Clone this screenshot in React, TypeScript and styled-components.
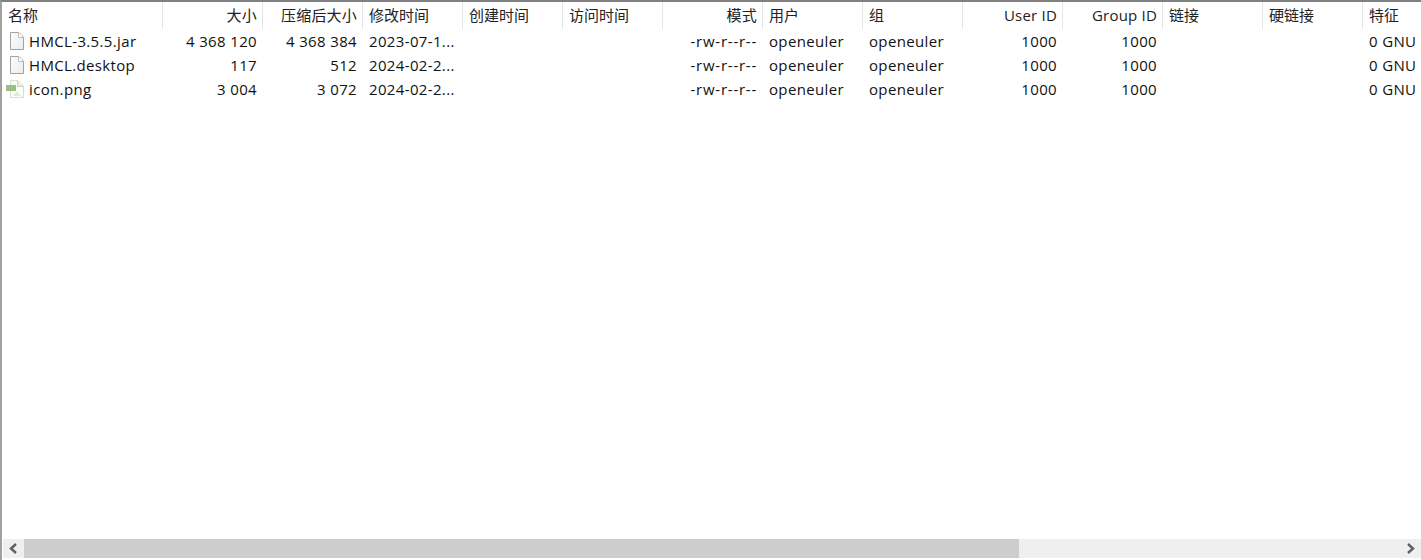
import React from "react"
import styled, { createGlobalStyle } from "styled-components"

const GlobalStyle = createGlobalStyle`
  html, body {
    margin: 0;
    padding: 0;
    background: #fff;
    overflow: hidden;
  }
`

const Window = styled.div`
  box-sizing: border-box;
  width: 1421px;
  height: 560px;
  display: flex;
  flex-direction: column;
  background: #fff;
  border-top: 2px solid #808080;
  border-left: 2px solid #a0a0a0;
  font-family: "Open Sans", "Noto Sans CJK SC", sans-serif;
  font-size: 15px;
  letter-spacing: 0.35px;
  color: #111;
`

const ListArea = styled.div`
  flex: 1;
  min-height: 0;
  overflow: hidden;
`

const columns = "161px repeat(12, 100px) 60px"

const HeaderRow = styled.div`
  display: grid;
  grid-template-columns: ${columns};
  height: 27px;
`

const HeaderCell = styled.div<{ $right?: boolean }>`
  box-sizing: border-box;
  padding: 0 5px 0 6px;
  height: 27px;
  line-height: 27px;
  white-space: nowrap;
  overflow: hidden;
  border-right: 1px solid #e5e5e5;
  letter-spacing: ${(p) => (p.$right ? "0.2px" : "0")};
  text-align: ${(p) => (p.$right ? "right" : "left")};
  color: #222;
`

const Row = styled.div`
  display: grid;
  grid-template-columns: ${columns};
  height: 24px;
`

const Cell = styled.div<{ $right?: boolean }>`
  box-sizing: border-box;
  padding: 0 6px;
  line-height: 24px;
  white-space: nowrap;
  overflow: hidden;
  text-align: ${(p) => (p.$right ? "right" : "left")};
`

const ModeCell = styled(Cell)`
  letter-spacing: 0.75px;
`

const NameCell = styled(Cell)`
  display: flex;
  align-items: center;
  gap: 5px;
`

const IconSlot = styled.svg`
  flex: none;
  display: block;
`

const PngSlot = styled(IconSlot)`
  margin-left: -2px;
`

const ScrollBar = styled.div`
  display: flex;
  height: 19px;
  margin-bottom: 2px;
  margin-left: 1px;
  background: #efefef;
`

const ScrollButton = styled.div`
  width: 21px;
  display: flex;
  align-items: center;
  justify-content: center;
  flex: none;
`

const ScrollThumb = styled.div`
  width: 995px;
  flex: none;
  background: #cdcdcd;
`

const ScrollTrack = styled.div`
  flex: 1;
`

const FileIcon = () => (
  <IconSlot width="16" height="18" viewBox="0 0 16 18">
    <defs>
      <linearGradient id="sheet" x1="0" y1="0" x2="1" y2="1">
        <stop offset="0" stopColor="#fdfdfd" />
        <stop offset="1" stopColor="#ececec" />
      </linearGradient>
    </defs>
    <path d="M2.5 0.5H11L15.5 5V17.5H2.5Z" fill="url(#sheet)" stroke="#a3a3a3" />
    <path d="M10.5 0.5V5.5H15.5" fill="#fff" stroke="#bcbcbc" />
  </IconSlot>
)

const PngIcon = () => (
  <PngSlot width="18" height="18" viewBox="0 0 18 18">
    <path d="M4.5 0.5H12L17.5 6V17.5H4.5Z" fill="#fbfdf9" stroke="#d3e0ca" />
    <path d="M11.5 0.5V6.5H17.5" fill="#e6f0de" stroke="#c3d6b5" />
    <rect x="0" y="5" width="10" height="6" fill="#9cbf87" />
    <path d="M7 16L11 11.5L15 16Z" fill="#dcebd2" />
  </PngSlot>
)

const Chevron = ({ d }: { d: string }) => (
  <svg width="9" height="11" viewBox="0 0 9 11">
    <path d={d} fill="none" stroke="#606060" strokeWidth="2.4" />
  </svg>
)

const headers: [string, boolean][] = [
  ["名称", false],
  ["大小", true],
  ["压缩后大小", true],
  ["修改时间", false],
  ["创建时间", false],
  ["访问时间", false],
  ["模式", true],
  ["用户", false],
  ["组", false],
  ["User ID", true],
  ["Group ID", true],
  ["链接", false],
  ["硬链接", false],
  ["特征", false],
]

const files = [
  { name: "HMCL-3.5.5.jar", size: "4 368 120", packed: "4 368 384", date: "2023-07-1...", icon: <FileIcon /> },
  { name: "HMCL.desktop", size: "117", packed: "512", date: "2024-02-2...", icon: <FileIcon /> },
  { name: "icon.png", size: "3 004", packed: "3 072", date: "2024-02-2...", icon: <PngIcon /> },
]

export default function App() {
  return (
    <>
      <GlobalStyle />
      <Window>
        <ListArea>
          <HeaderRow>
            {headers.map(([label, right]) => (
              <HeaderCell key={label} $right={right}>
                {label}
              </HeaderCell>
            ))}
          </HeaderRow>
          {files.map((f) => (
            <Row key={f.name}>
              <NameCell>
                {f.icon}
                {f.name}
              </NameCell>
              <Cell $right>{f.size}</Cell>
              <Cell $right>{f.packed}</Cell>
              <Cell>{f.date}</Cell>
              <Cell />
              <Cell />
              <ModeCell $right>-rw-r--r--</ModeCell>
              <Cell>openeuler</Cell>
              <Cell>openeuler</Cell>
              <Cell $right>1000</Cell>
              <Cell $right>1000</Cell>
              <Cell />
              <Cell />
              <Cell>0 GNU ...</Cell>
            </Row>
          ))}
        </ListArea>
        <ScrollBar>
          <ScrollButton>
            <Chevron d="M7 1L2 5.5L7 10" />
          </ScrollButton>
          <ScrollThumb />
          <ScrollTrack />
          <ScrollButton>
            <Chevron d="M2 1L7 5.5L2 10" />
          </ScrollButton>
        </ScrollBar>
      </Window>
    </>
  )
}
